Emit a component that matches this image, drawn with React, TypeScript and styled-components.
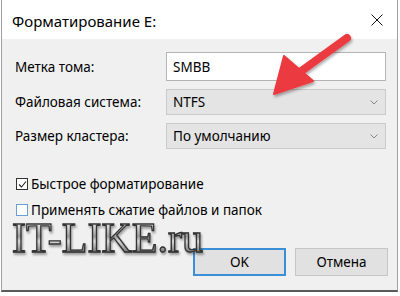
import React from "react"
import styled, { createGlobalStyle } from "styled-components"

const Global = createGlobalStyle`
  html, body {
    margin: 0;
    padding: 0;
    background: #ffffff;
  }
  body {
    font-family: "Noto Sans", "Open Sans", sans-serif;
    font-size: 13.5px;
    color: #000;
  }
`

const fields = [
  { label: "Метка тома:", value: "SMBB", kind: "input" },
  { label: "Файловая система:", value: "NTFS", kind: "select" },
  { label: "Размер кластера:", value: "По умолчанию", kind: "select" },
]

const options = [
  { label: "Быстрое форматирование", checked: true },
  { label: "Применять сжатие файлов и папок", checked: false },
]

export default function App() {
  return (
    <>
      <Global />
      <S.Window>
        <S.TitleBar>
          <S.Title>Форматирование E:</S.Title>
          <S.Close aria-label="close">
            <svg width="12" height="12" viewBox="0 0 12 12">
              <path d="M0.5 0.5 L11.5 11.5 M11.5 0.5 L0.5 11.5" stroke="#111" strokeWidth="1" />
            </svg>
          </S.Close>
        </S.TitleBar>
        <S.Body>
          <S.Form>
            {fields.map((f) => (
              <React.Fragment key={f.label}>
                <S.Label>{f.label}</S.Label>
                {f.kind === "input" ? (
                  <S.Input>{f.value}</S.Input>
                ) : (
                  <S.Select>
                    <span>{f.value}</span>
                    <svg width="8" height="5" viewBox="0 0 8 5">
                      <path d="M0.5 0.5 L4 4 L7.5 0.5" stroke="#888" strokeWidth="1" fill="none" />
                    </svg>
                  </S.Select>
                )}
              </React.Fragment>
            ))}
          </S.Form>
          <S.Options>
            {options.map((o) => (
              <S.Option key={o.label}>
                <S.Box checked={o.checked}>
                  {o.checked && (
                    <svg width="9" height="9" viewBox="0 0 9 9">
                      <path d="M1 4.5 L3.5 7 L8 1.5" stroke="#222" strokeWidth="1.1" fill="none" />
                    </svg>
                  )}
                </S.Box>
                {o.label}
              </S.Option>
            ))}
          </S.Options>
          <S.Buttons>
            <S.Button primary>OK</S.Button>
            <S.Button>Отмена</S.Button>
          </S.Buttons>
          <S.Watermark>IT-LIKE.ru</S.Watermark>
        </S.Body>
        <S.Arrow width="400" height="120" viewBox="0 0 400 120">
          <defs>
            <filter id="sh" x="-20%" y="-20%" width="140%" height="140%">
              <feDropShadow dx="1" dy="2" stdDeviation="1.5" floodColor="#000" floodOpacity="0.35" />
            </filter>
          </defs>
          <g filter="url(#sh)">
            <path d="M345 38 L298 72" stroke="#ec3a3f" strokeWidth="8" strokeLinecap="round" />
            <path d="M272 94 L282 56 L311 81 Z" fill="#ec3a3f" stroke="#ec3a3f" strokeWidth="2" strokeLinejoin="round" />
          </g>
        </S.Arrow>
      </S.Window>
    </>
  )
}

const S = {
  Window: styled.div`
    position: relative;
    box-sizing: border-box;
    width: 397px;
    height: 292px;
    margin-left: 1px;
    border: 1px solid #a0a0a0;
    border-top: none;
    border-bottom: 2px solid #5a5a5a;
    display: flex;
    flex-direction: column;
    overflow: hidden;
  `,
  TitleBar: styled.div`
    height: 39px;
    background: #ffffff;
    display: flex;
    align-items: center;
    justify-content: space-between;
    padding: 0 12px 0 10px;
  `,
  Title: styled.div`
    font-size: 15px;
    padding-top: 2px;
  `,
  Close: styled.div`
    width: 12px;
    height: 12px;
    display: flex;
    margin-right: 2px;
  `,
  Body: styled.div`
    position: relative;
    flex: 1;
    background: #f0f0f0;
    padding: 13px 0 0 13px;
  `,
  Form: styled.div`
    display: grid;
    grid-template-columns: 151px 220px;
    grid-auto-rows: auto;
    row-gap: 8px;
    align-items: center;
  `,
  Label: styled.div`
    line-height: 20px;
  `,
  Input: styled.div`
    box-sizing: border-box;
    height: 29px;
    background: #ffffff;
    border: 1px solid #b4b4b4;
    padding: 0 6px;
    display: flex;
    align-items: center;
  `,
  Select: styled.div`
    box-sizing: border-box;
    height: 26px;
    background: #e4e4e4;
    border: 1px solid #cacaca;
    padding: 0 7px 0 6px;
    display: flex;
    align-items: center;
    justify-content: space-between;
  `,
  Options: styled.div`
    display: flex;
    flex-direction: column;
    gap: 8px;
    margin-top: 26px;
    padding-left: 1px;
  `,
  Option: styled.div`
    display: flex;
    align-items: center;
    gap: 3px;
    height: 18px;
  `,
  Box: styled.span<{ checked?: boolean }>`
    box-sizing: border-box;
    width: 12px;
    height: 12px;
    background: #ffffff;
    border: 1px solid ${({ checked }) => (checked ? "#333333" : "#6a9fd6")};
    display: flex;
    align-items: center;
    justify-content: center;
  `,
  Buttons: styled.div`
    display: flex;
    justify-content: flex-end;
    gap: 9px;
    margin-top: 29px;
    padding-right: 9px;
  `,
  Button: styled.div<{ primary?: boolean }>`
    box-sizing: border-box;
    width: 93px;
    height: 28px;
    background: #e1e1e1;
    border: ${({ primary }) => (primary ? "2px solid #3c8fd6" : "1px solid #c6c6c6")};
    display: flex;
    align-items: center;
    justify-content: center;
  `,
  Watermark: styled.div`
    position: absolute;
    left: 10px;
    top: 183px;
    font-family: "Liberation Serif", serif;
    font-size: 42px;
    line-height: 32px;
    background: linear-gradient(180deg, #f4f4f4 0%, #9a9a9a 45%, #d8d8d8 60%, #6a6a6a 100%);
    -webkit-background-clip: text;
    background-clip: text;
    color: transparent;
    -webkit-text-stroke: 1.3px #333333;
    filter: drop-shadow(1px 2px 1px rgba(0, 0, 0, 0.35));
  `,
  Arrow: styled.svg`
    position: absolute;
    left: 0;
    top: 0;
    pointer-events: none;
  `,
}
